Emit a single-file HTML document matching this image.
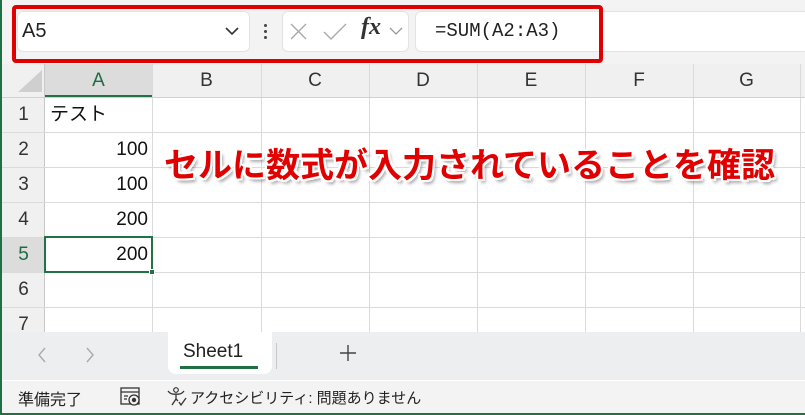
<!DOCTYPE html>
<html><head><meta charset="utf-8"><style>
*{margin:0;padding:0;box-sizing:border-box}
body{width:805px;height:415px;overflow:hidden;background:#fff;position:relative;font-family:"Liberation Sans","Noto Sans CJK JP",sans-serif;}
.a{position:absolute}
.hl{position:absolute;height:1px;background:#dadada}
.vl{position:absolute;width:1px;background:#dadada}
.ch{position:absolute;top:64px;height:33px;line-height:33px;text-align:center;font-size:19px;color:#333}
.rh{position:absolute;left:2px;width:43px;height:35px;line-height:35px;text-align:center;font-size:19px;color:#333}
.num{position:absolute;left:46px;width:102px;height:35px;line-height:35px;text-align:right;font-size:19px;color:#111}
</style></head><body>
<div class="a" style="left:0;top:0;width:805px;height:64px;background:#f3f3f3"></div>
<div class="a" style="left:17px;top:11px;width:233px;height:41px;background:#fff;border:1px solid #e3e3e3;border-radius:6px"></div>
<div class="a" style="left:22px;top:20px;font-size:20px;color:#222">A5</div>
<svg class="a" style="left:224px;top:26px" width="16" height="10"><path d="M2 2 L8 8 L14 2" stroke="#333" stroke-width="1.6" fill="none"/></svg>
<div class="a" style="left:264px;top:24px;width:3px;height:3px;background:#444;border-radius:2px"></div>
<div class="a" style="left:264px;top:30px;width:3px;height:3px;background:#444;border-radius:2px"></div>
<div class="a" style="left:264px;top:36px;width:3px;height:3px;background:#444;border-radius:2px"></div>
<div class="a" style="left:282px;top:11px;width:127px;height:41px;background:#fff;border:1px solid #e3e3e3;border-radius:6px"></div>
<svg class="a" style="left:289px;top:23px" width="20" height="18"><path d="M2 1 L17 16 M17 1 L2 16" stroke="#aaa" stroke-width="1.4" fill="none"/></svg>
<svg class="a" style="left:322px;top:23px" width="26" height="18"><path d="M2 9 L9 16 L24 1" stroke="#aaa" stroke-width="1.4" fill="none"/></svg>
<div class="a" style="left:361px;top:14px;font-family:'Liberation Serif',serif;font-style:italic;font-weight:bold;font-size:24px;color:#333">fx</div>
<svg class="a" style="left:389px;top:27px" width="14" height="9"><path d="M1 1 L7 7 L13 1" stroke="#999" stroke-width="1.3" fill="none"/></svg>
<div class="a" style="left:415px;top:11px;width:395px;height:41px;background:#fff;border:1px solid #e3e3e3;border-radius:6px"></div>
<div class="a" style="left:435px;top:20px;font-family:'Liberation Mono','DejaVu Sans Mono',monospace;font-size:19px;color:#222">=SUM(A2:A3)</div>
<div class="a" style="left:12px;top:5px;width:591px;height:58px;border:4px solid #e10000;border-radius:4px"></div>
<div class="a" style="left:0;top:64px;width:805px;height:33px;background:#f0f0f0"></div>
<div class="a" style="left:45px;top:64px;width:107px;height:33px;background:#dcdcdc"></div>
<div class="a" style="left:45px;top:95px;width:107px;height:2px;background:#217346"></div>
<svg class="a" style="left:14px;top:68px" width="30" height="26"><path d="M28 2 L28 24 L4 24 Z" fill="#cfcfcf"/></svg>
<div class="a" style="left:0;top:97px;width:45px;height:235px;background:#f0f0f0"></div>
<div class="a" style="left:0;top:237px;width:45px;height:35px;background:#dcdcdc"></div>
<div class="vl" style="left:44px;top:64px;height:268px;background:#c8c8c8"></div>
<div class="vl" style="left:152px;top:64px;height:268px"></div>
<div class="vl" style="left:261px;top:64px;height:268px"></div>
<div class="vl" style="left:369px;top:64px;height:268px"></div>
<div class="vl" style="left:477px;top:64px;height:268px"></div>
<div class="vl" style="left:585px;top:64px;height:268px"></div>
<div class="vl" style="left:693px;top:64px;height:268px"></div>
<div class="vl" style="left:800px;top:64px;height:268px"></div>
<div class="hl" style="left:0;top:97px;width:805px;background:#d0d0d0"></div>
<div class="hl" style="left:0;top:132px;width:805px"></div>
<div class="hl" style="left:0;top:167px;width:805px"></div>
<div class="hl" style="left:0;top:202px;width:805px"></div>
<div class="hl" style="left:0;top:237px;width:805px"></div>
<div class="hl" style="left:0;top:272px;width:805px"></div>
<div class="hl" style="left:0;top:307px;width:805px"></div>
<div class="ch" style="left:45px;width:107px;color:#1e6b41">A</div>
<div class="ch" style="left:152px;width:109px">B</div>
<div class="ch" style="left:261px;width:108px">C</div>
<div class="ch" style="left:369px;width:108px">D</div>
<div class="ch" style="left:477px;width:108px">E</div>
<div class="ch" style="left:585px;width:108px">F</div>
<div class="ch" style="left:693px;width:107px">G</div>
<div class="rh" style="top:97px">1</div>
<div class="rh" style="top:132px">2</div>
<div class="rh" style="top:167px">3</div>
<div class="rh" style="top:202px">4</div>
<div class="rh" style="top:237px;color:#1e6b41">5</div>
<div class="rh" style="top:272px">6</div>
<div class="rh" style="top:307px">7</div>
<div class="a" style="left:50px;top:97px;height:35px;line-height:35px;font-size:19px;color:#111">テスト</div>
<div class="num" style="top:132px">100</div>
<div class="num" style="top:167px">100</div>
<div class="num" style="top:202px">200</div>
<div class="num" style="top:237px">200</div>
<div class="a" style="left:44px;top:236px;width:109px;height:37px;border:2px solid #217346"></div>
<div class="a" style="left:149px;top:269px;width:6px;height:6px;background:#217346;border:1px solid #fff"></div>
<div class="a" style="left:164px;top:138px;font-size:34px;font-weight:600;color:#e10000;white-space:nowrap;text-shadow:2px 0 0 #fff,-2px 0 0 #fff,0 2px 0 #fff,0 -2px 0 #fff,2px 2px 0 #fff,-2px -2px 0 #fff,2px -2px 0 #fff,-2px 2px 0 #fff,3px 4px 3px rgba(0,0,0,0.35)">セルに数式が入力されていることを確認</div>
<div class="a" style="left:0;top:332px;width:805px;height:48px;background:#edeef0"></div>
<svg class="a" style="left:36px;top:346px" width="12" height="18"><path d="M9 2 L3 9 L9 16" stroke="#aaa" stroke-width="1.4" fill="none"/></svg>
<svg class="a" style="left:84px;top:346px" width="12" height="18"><path d="M3 2 L9 9 L3 16" stroke="#aaa" stroke-width="1.4" fill="none"/></svg>
<div class="a" style="left:168px;top:332px;width:104px;height:42px;background:#fff;border-radius:0 0 8px 8px"></div>
<div class="a" style="left:183px;top:341px;font-size:19px;color:#222">Sheet1</div>
<div class="a" style="left:180px;top:366px;width:78px;height:3px;background:#1e7145"></div>
<div class="a" style="left:276px;top:343px;width:1px;height:26px;background:#c8c8c8"></div>
<svg class="a" style="left:339px;top:344px" width="18" height="18"><path d="M9 1 V17 M1 9 H17" stroke="#444" stroke-width="1.4"/></svg>
<div class="a" style="left:0;top:380px;width:805px;height:33px;background:#f3f3f3;border-top:1px solid #fff"></div>
<div class="a" style="left:18px;top:386px;font-size:16px;color:#222">準備完了</div>
<svg class="a" style="left:120px;top:387px" width="22" height="20"><rect x="1" y="1" width="18" height="16" fill="none" stroke="#333" stroke-width="1.3"/><path d="M1 5 H19 M4 9 H8 M4 12 H7" stroke="#333" stroke-width="1.2"/><circle cx="14" cy="13" r="5" fill="#f3f3f3" stroke="#333" stroke-width="1.3"/><circle cx="14" cy="13" r="2.2" fill="#333"/></svg>
<svg class="a" style="left:166px;top:386px" width="22" height="22"><circle cx="10" cy="4" r="2.3" fill="none" stroke="#333" stroke-width="1.2"/><path d="M2 5 Q5 9 10 8 Q15 9 18 5 M10 8 V13 L6 19 M10 13 L12 15 M13 16 L15 19 L20 12" stroke="#333" stroke-width="1.3" fill="none"/></svg>
<div class="a" style="left:190px;top:387px;font-size:15px;color:#222;white-space:nowrap">アクセシビリティ: 問題ありません</div>
<div class="a" style="left:0;top:0;width:2px;height:415px;background:#1e7145"></div>
<div class="a" style="left:0;top:413px;width:805px;height:2px;background:#1e7145"></div>
</body></html>
